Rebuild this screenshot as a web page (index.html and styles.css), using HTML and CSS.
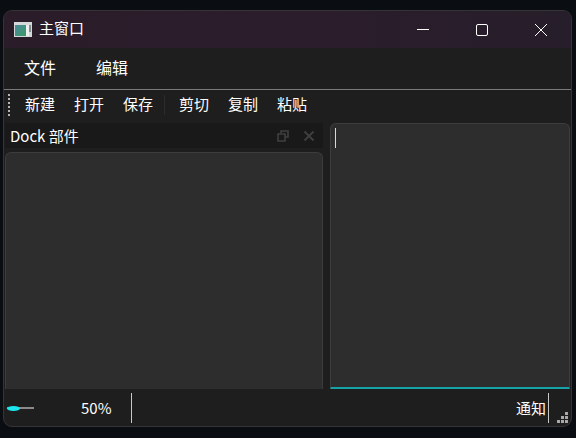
FILE: index.html
```html
<!doctype html>
<html lang="zh-CN">
<head>
<meta charset="utf-8">
<title>主窗口</title>
<link rel="stylesheet" href="styles.css">
</head>
<body>
<div class="window">

  <!-- title bar -->
  <div class="titlebar">
    <svg class="app-icon" width="18" height="15" viewBox="0 0 18 15">
      <defs>
        <linearGradient id="pane" x1="0" y1="0" x2="1" y2="1">
          <stop offset="0" stop-color="#4a8a9c"/>
          <stop offset="1" stop-color="#3c9a64"/>
        </linearGradient>
      </defs>
      <rect width="18" height="15" fill="#d4d8d8"/>
      <rect x="1" y="3" width="11" height="11" fill="url(#pane)"/>
      <rect x="12" y="3" width="3" height="11" fill="#eef0f0"/>
      <rect x="15" y="3" width="2" height="7" fill="#7f8c90"/>
    </svg>
    <span class="title-text">主窗口</span>
    <div class="win-buttons">
      <svg class="win-btn" width="14" height="14" viewBox="0 0 14 14"><path d="M1 6.5h12" stroke="#fff" stroke-width="1"/></svg>
      <svg class="win-btn" width="14" height="14" viewBox="0 0 14 14"><rect x="1.5" y="1.5" width="11" height="11" rx="1.5" fill="none" stroke="#fff"/></svg>
      <svg class="win-btn" width="14" height="14" viewBox="0 0 14 14"><path d="M1 1l12 12M13 1L1 13" stroke="#fff" stroke-width="1"/></svg>
    </div>
  </div>

  <!-- menu bar -->
  <div class="menubar">
    <span class="menu-item">文件</span>
    <span class="menu-item">编辑</span>
  </div>

  <!-- tool bar -->
  <div class="toolbar">
    <span class="grip"></span>
    <span class="tool">新建</span>
    <span class="tool">打开</span>
    <span class="tool">保存</span>
    <span class="tool-sep"></span>
    <span class="tool">剪切</span>
    <span class="tool">复制</span>
    <span class="tool">粘贴</span>
  </div>

  <!-- central area -->
  <div class="central">
    <div class="dock">
      <div class="dock-title">
        <span class="dock-label">Dock 部件</span>
        <svg class="dock-btn" width="12" height="12" viewBox="0 0 12 12"><path d="M4 3V1h7v6H8M1 4h7v7H1z" fill="none" stroke="#3f3f3f" stroke-width="1.6"/></svg>
        <svg class="dock-btn" width="12" height="12" viewBox="0 0 12 12"><path d="M1.5 1.5l9 9M10.5 1.5l-9 9" stroke="#3f3f3f" stroke-width="2"/></svg>
      </div>
      <div class="dock-body"></div>
    </div>
    <div class="editor"><span class="caret"></span></div>
  </div>

  <!-- status bar -->
  <div class="statusbar">
    <div class="slider"><span class="slider-handle"></span></div>
    <span class="percent">50%</span>
    <span class="status-sep"></span>
    <span class="notice">通知</span>
    <span class="notice-sep"></span>
    <svg class="size-grip" width="11" height="11" viewBox="0 0 11 11">
      <path d="M8 0h3v3H8zM4 4h3v3H4zM8 4h3v3H8zM0 8h3v3H0zM4 8h3v3H4zM8 8h3v3H8z" fill="#a8a8a8"/>
    </svg>
  </div>
</div>
</body>
</html>
```

FILE: styles.css
```css
*{box-sizing:border-box;margin:0;padding:0}
html,body{
  height:100%;
  background:#0a0d12;
  font-family:"Noto Sans CJK SC","Noto Sans",sans-serif;
  color:#fff;
  overflow:hidden;
}
body{padding:10px 4px 11px 3px}

.window{
  height:100%;
  display:flex;
  flex-direction:column;
  background:#1e1e1e;
  border:1px solid #343438;
  border-radius:9px;
  overflow:hidden;
}

/* title bar */
.titlebar{
  height:37px;
  flex:none;
  display:flex;
  align-items:center;
  padding-left:10px;
  background:linear-gradient(90deg,#2b1c2a,#2b1d2b 60%,#261e2a);
}
.app-icon{flex:none;margin-top:-1px}
.title-text{font-size:15px;line-height:20px;margin:-3px 0 0 7px}
.win-buttons{margin-left:auto;display:flex;gap:45px;padding-right:23px}
.win-btn{display:block}

/* menu bar */
.menubar{
  height:42px;
  flex:none;
  display:flex;
  align-items:center;
  gap:40px;
  padding:0 0 4px 20px;
  font-size:16px;
  border-bottom:1px solid #7a7a7a;
}

/* tool bar */
.toolbar{
  height:30px;
  flex:none;
  display:flex;
  align-items:center;
  padding:0 0 0 4px;
  font-size:15px;
}
.grip{
  width:2px;
  height:22px;
  margin-right:15px;
  background:repeating-linear-gradient(180deg,#b5b5b5 0 2px,transparent 2px 4px);
}
.tool{margin-right:19px;line-height:20px;margin-top:-2px}
.tool-sep{width:1px;height:20px;background:#2b2b2b;margin:0 14px 0 -8px}

/* central area */
.central{
  flex:1;
  min-height:0;
  display:flex;
  gap:7px;
  padding:3px 0 0 1px;
}
.dock{flex:none;width:318px;display:flex;flex-direction:column}
.dock-title{
  height:25px;
  flex:none;
  display:flex;
  align-items:center;
  gap:14px;
  padding:0 8px 0 5px;
  background:#191919;
  font-size:15px;
}
.dock-label{margin-right:auto;line-height:20px}
.dock-body{
  flex:1;
  margin-top:4px;
  background:#2d2d2d;
  border:1px solid #3c3c3c;
  border-bottom:none;
  border-radius:6px 6px 0 0;
}
.editor{
  flex:1;
  margin-right:1px;
  padding:4px;
  background:#2d2d2d;
  border:1px solid #3c3c3c;
  border-bottom:2px solid #16a3a8;
  border-radius:6px 6px 0 0;
}
.caret{display:block;width:1px;height:20px;background:#d8d8d8}

/* status bar */
.statusbar{
  height:37px;
  flex:none;
  display:flex;
  align-items:center;
  padding-left:3px;
  font-size:15px;
}
.slider{flex:none;width:27px;height:2px;margin-top:1px;background:#8a8a8a;display:flex;align-items:center}
.slider-handle{flex:none;width:13px;height:5px;border-radius:50%;background:#1ce6f0}
.percent{margin-left:47px;width:50px;line-height:20px}
.status-sep{width:1px;height:30px;background:#c8c8c8;margin-top:1px}
.notice{margin-left:auto;line-height:20px}
.notice-sep{width:1px;height:30px;background:#c8c8c8;margin:1px 0 0 2px}
.size-grip{margin:19px 3px 0 8px}
```
